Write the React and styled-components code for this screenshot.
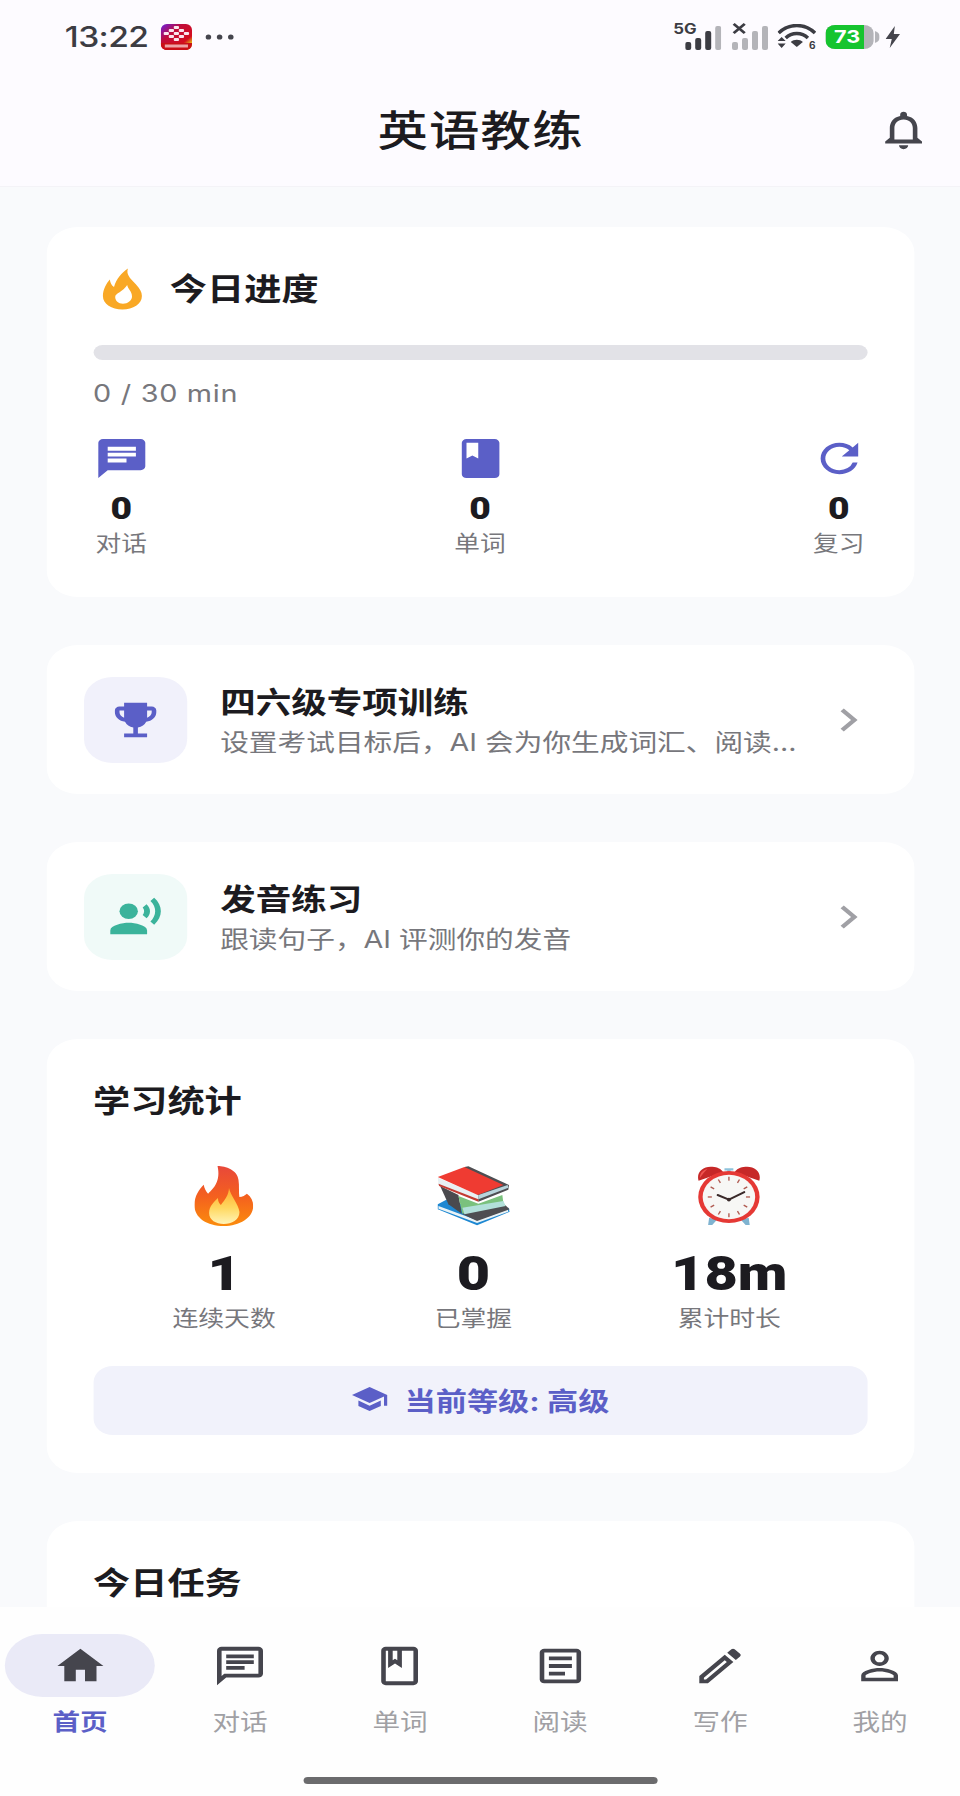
import React from 'react';
import styled, { createGlobalStyle } from 'styled-components';
import {
  MdNotificationsNone, MdChat, MdBook, MdRefresh, MdEmojiEvents, MdRecordVoiceOver,
  MdChevronRight, MdSchool, MdHome, MdOutlineChat, MdOutlineBook, MdOutlineArticle,
  MdOutlineEdit, MdPersonOutline,
} from 'react-icons/md';

const FONT = `Inter, "Noto Sans CJK SC", "Noto Sans", sans-serif`;
const NUMBER_FONT = `Roboto, Inter, sans-serif`;
const INDIGO = '#5b5fc7';

const GlobalStyle = createGlobalStyle`
  html, body {
    margin: 0;
    padding: 0;
    background: #f9fafc;
    overflow: hidden;
  }
  * { box-sizing: border-box; }
`;

// the source capture is 1.2x wider than tall, so the page is laid out at 800 and stretched
const Stretch = styled.div`
  width: 800px;
  height: 1796px;
  transform: scaleX(1.2);
  transform-origin: left top;
  display: flex;
  flex-direction: column;
  font-family: ${FONT};
  background: #f9fafc;
  overflow: hidden;
`;

const Header = styled.header`
  flex: none;
  background: #fdfbff;
  border-bottom: 1px solid #f4f3f7;
`;

const StatusBar = styled.div`
  height: 74px;
  padding: 0 0 0 54px;
  display: flex;
  align-items: center;
  justify-content: space-between;
`;

const StatusLeft = styled.div`
  display: flex;
  align-items: center;
`;

const Time = styled.span`
  font-family: Inter, sans-serif;
  font-size: 28px;
  font-weight: 500;
  color: #3c3c43;
  letter-spacing: -0.5px;
  margin-right: 10px;
`;

const StatusRight = styled.div`
  display: flex;
  align-items: center;
  margin-right: 50px;
`;

const SignalWrap = styled.div`
  position: relative;
  width: 30px;
  height: 26px;
  margin-right: ${(p) => p.$gap}px;
`;

const FiveG = styled.span`
  position: absolute;
  left: -10px;
  top: -2px;
  font-size: 14px;
  line-height: 14px;
  font-weight: 700;
  color: #3c3c43;
`;

const Battery = styled.div`
  position: relative;
  width: 40px;
  height: 24px;
  margin-left: 8px;
  border-radius: 8px;
  overflow: hidden;
  background: #b4b4b9;
  display: flex;
`;

const BatteryFill = styled.div`
  width: 81%;
  background: #16c42f;
`;

const BatteryText = styled.span`
  position: absolute;
  left: 5px;
  right: 9px;
  top: 0;
  line-height: 24px;
  text-align: center;
  font-size: 18px;
  font-weight: 700;
  color: #fff;
`;

const SignalSvg = styled.svg`
  position: absolute;
  right: 0;
  bottom: 0;
`;

const CrossSvg = styled.svg`
  position: absolute;
  left: 0;
  top: -1px;
`;

const DotsSvg = styled.svg`
  margin-left: 11px;
`;

const BoltSvg = styled.svg`
  margin-left: 5px;
`;

const NubSvg = styled.svg`
  margin-left: 1px;
`;

const TopBar = styled.div`
  height: 112px;
  padding-right: 24px;
  position: relative;
  display: flex;
  align-items: center;
  justify-content: flex-end;
  color: #45454d;
`;

const AppTitle = styled.h1`
  position: absolute;
  left: 1px;
  right: 0;
  top: 1px;
  margin: 0;
  line-height: 112px;
  text-align: center;
  font-size: 42px;
  font-weight: 500;
  color: #1c1b20;
  letter-spacing: 1px;
`;

const Content = styled.main`
  flex: 1;
  min-height: 0;
  overflow: hidden;
  padding: 40px 38.5px 0;
  display: flex;
  flex-direction: column;
  gap: 48px;
`;

const Card = styled.section`
  flex: none;
  background: #fff;
  border-radius: 26px;
  padding: ${(p) => p.$padding || '42px 39px 38px'};
`;

const ProgressHead = styled.div`
  display: flex;
  align-items: center;
  gap: 16px;
  height: 48px;
  color: #f9a825;
`;

const SectionTitle = styled.h2`
  margin: 0;
  font-size: 31px;
  line-height: 40px;
  font-weight: 700;
  color: #1c1b20;
`;

const ProgressTrack = styled.div`
  height: 15px;
  margin-top: 32px;
  border-radius: 8px;
  background: #e2e2e7;
`;

const ProgressText = styled.div`
  margin-top: 19px;
  font-size: 24px;
  line-height: 30px;
  color: #77777c;
  letter-spacing: 0.6px;
`;

const CountRow = styled.div`
  display: flex;
  justify-content: space-between;
  margin-top: 26px;
`;

const Count = styled.div`
  width: 47px;
  display: flex;
  flex-direction: column;
  align-items: center;
  color: ${INDIGO};
`;

const CountValue = styled.div`
  margin-top: 10px;
  font-family: ${NUMBER_FONT};
  font-size: 31px;
  line-height: 34px;
  font-weight: 900;
  color: #1c1b20;
`;

const CountLabel = styled.div`
  margin-top: 2px;
  font-size: 21.4px;
  line-height: 30px;
  color: #77777c;
  white-space: nowrap;
`;

const FeatureRow = styled.div`
  display: flex;
  align-items: center;
`;

const FeatureIcon = styled.div`
  flex: none;
  width: 86px;
  height: 86px;
  border-radius: 24px;
  display: flex;
  align-items: center;
  justify-content: center;
  background: ${(p) => p.$bg};
  color: ${(p) => p.$color};
`;

const FeatureBody = styled.div`
  flex: 1;
  min-width: 0;
  margin-left: 28px;
  padding-top: 2px;
`;

const FeatureTitle = styled.div`
  font-size: 29.6px;
  line-height: 40px;
  font-weight: 700;
  color: #1c1b20;
`;

const FeatureDesc = styled.div`
  margin-top: 4px;
  font-size: 23.9px;
  line-height: 34px;
  color: #77777c;
  white-space: nowrap;
`;

const Chevron = styled.div`
  flex: none;
  display: flex;
  color: #a0a0a5;
  margin-right: 5px;
`;

const StatsRow = styled.div`
  display: flex;
  justify-content: space-around;
  margin-top: 45px;
`;

const Stat = styled.div`
  display: flex;
  flex-direction: column;
  align-items: center;
`;

const StatValue = styled.div`
  margin-top: 22px;
  font-family: ${NUMBER_FONT};
  font-size: 48px;
  line-height: 52px;
  font-weight: 900;
  color: #1c1b20;
`;

const StatLabel = styled.div`
  margin-top: 3px;
  font-size: 21.5px;
  line-height: 30px;
  color: #77777c;
`;

const LevelBar = styled.div`
  height: 69px;
  margin-top: 33px;
  padding-bottom: 3px;
  border-radius: 16px;
  background: #f1f2fb;
  display: flex;
  align-items: center;
  justify-content: center;
  gap: 13px;
  color: ${INDIGO};
  font-size: 26px;
  font-weight: 700;
`;

const BottomNav = styled.nav`
  flex: none;
  background: #fefefe;
  padding-top: 27px;
  display: flex;
  flex-direction: column;
  align-items: center;
`;

const Tabs = styled.div`
  align-self: stretch;
  display: grid;
  grid-template-columns: repeat(6, 1fr);
`;

const Tab = styled.div`
  display: flex;
  flex-direction: column;
  align-items: center;
`;

const TabIcon = styled.div`
  width: 125px;
  height: 63px;
  border-radius: 32px;
  display: flex;
  align-items: center;
  justify-content: center;
  color: #45454d;
  background: ${(p) => (p.$active ? '#eaeaf7' : 'transparent')};
`;

const TabLabel = styled.div`
  margin-top: 10px;
  font-size: 23px;
  line-height: 30px;
  font-weight: ${(p) => (p.$active ? 700 : 400)};
  color: ${(p) => (p.$active ? INDIGO : '#a0a0a4')};
`;

const HomeIndicator = styled.div`
  width: 295px;
  height: 7px;
  margin: 40px 0 12px;
  border-radius: 4px;
  background: #6b6b6d;
`;

const AppBadge = () => (
  <svg width="26" height="26" viewBox="0 0 31 26" preserveAspectRatio="none">
    <defs>
      <linearGradient id="badge" x1="0" y1="0" x2="1" y2="1">
        <stop offset="0" stopColor="#6a1fe0" />
        <stop offset="0.35" stopColor="#c00d3a" />
        <stop offset="0.72" stopColor="#d40d1e" />
        <stop offset="0.86" stopColor="#e6c21a" />
      </linearGradient>
    </defs>
    <rect width="31" height="26" rx="6" fill="url(#badge)" />
    <path d="M0 19 H31 V20 C31 23.5 28.5 26 25 26 H6 C2.5 26 0 23.5 0 20Z" fill="#c90f16" />
    {[[15.5, 2], [10.5, 5], [20.5, 5], [15.5, 8], [5.5, 8], [25.5, 8], [10.5, 11], [20.5, 11], [15.5, 14]].map(([x, y]) => (
      <rect key={`${x}-${y}`} x={x - 2.6} y={y} width="5.2" height="3" rx="1" fill="#fbe7ee" />
    ))}
    <rect x="4" y="20.5" width="23" height="3" fill="#f8d5d5" opacity="0.75" />
  </svg>
);

const Dots = () => (
  <DotsSvg width="24" height="6" viewBox="0 0 27 6" preserveAspectRatio="none">
    <circle cx="3" cy="3" r="2.6" fill="#45454d" />
    <circle cx="13.5" cy="3" r="2.6" fill="#45454d" />
    <circle cx="24" cy="3" r="2.6" fill="#45454d" />
  </DotsSvg>
);

const SignalBars = ({ levels }) => (
  <SignalSvg width="30" height="24" viewBox="0 0 36 24" preserveAspectRatio="none">
    {[8, 12, 19, 24].map((h, i) => (
      <rect key={h} x={i * 10} y={24 - h} width="6" height={h} rx="2" fill={i < levels ? '#3c3c43' : '#b4b4b9'} />
    ))}
  </SignalSvg>
);

const CrossMark = () => (
  <CrossSvg width="12" height="11" viewBox="0 0 13 12" preserveAspectRatio="none">
    <path d="M1.5 1 L11.5 11 M11.5 1 L1.5 11" stroke="#3c3c43" strokeWidth="2.6" />
  </CrossSvg>
);

const Wifi = () => (
  <svg width="32" height="26" viewBox="0 0 38 26" preserveAspectRatio="none">
    <path d="M1 9 C11 -1 27 -1 37 9" fill="none" stroke="#3c3c43" strokeWidth="3.4" />
    <path d="M8 14 C14 8 24 8 30 14" fill="none" stroke="#3c3c43" strokeWidth="3.4" />
    <path d="M13 18 C16 15 22 15 25 18 L19 23Z" fill="#3c3c43" />
    <path d="M3 13 L7 17 H-1Z M3 24 L7 19.5 H-1Z" fill="#3c3c43" transform="translate(1 0)" />
    <text x="31" y="25" fontSize="10" fontWeight="700" fill="#3c3c43" fontFamily="Inter, sans-serif">6</text>
  </svg>
);

const Bolt = () => (
  <BoltSvg width="12" height="22" viewBox="0 0 14 22" preserveAspectRatio="none">
    <path d="M9 0 L0 13 H6 L4 22 L14 8 H8Z" fill="#45454d" />
  </BoltSvg>
);

const BatteryNub = () => (
  <NubSvg width="4" height="12" viewBox="0 0 4 12">
    <path d="M0 0 C3 1 4 3 4 6 C4 9 3 11 0 12Z" fill="#b4b4b9" />
  </NubSvg>
);

const Flame = () => (
  <svg width="48" height="48" viewBox="0 0 48 48">
    <path
      fillRule="evenodd"
      fill="currentColor"
      d="M28.6 3.5 C27 9 30 13 35 19 C38.5 23.5 40.25 27 40.25 31 C40.25 39 33 44.5 24 44.5 C15 44.5 7.75 39 7.75 31 C7.75 24 11 18 13.5 14.5 C14 18 15 20.5 17 22 C19 14 23 8 28.6 3.5Z M28 20 C28.5 24 32 26 32 31.5 C32 35.5 28.5 38.7 24.5 38.7 C20.5 38.7 18 35.5 18 32 C18 28 24.5 27 28 20Z"
    />
  </svg>
);

const FireEmoji = () => (
  <svg width="49" height="60" viewBox="0 0 60 60" preserveAspectRatio="none">
    <defs>
      <linearGradient id="fireOuter" x1="0.5" y1="0" x2="0.5" y2="1">
        <stop offset="0" stopColor="#e8483a" />
        <stop offset="0.5" stopColor="#f4601f" />
        <stop offset="1" stopColor="#fb8c0c" />
      </linearGradient>
      <linearGradient id="fireInner" x1="0.5" y1="0" x2="0.5" y2="1">
        <stop offset="0" stopColor="#ffab2e" />
        <stop offset="0.55" stopColor="#ffd860" />
        <stop offset="1" stopColor="#fff4b8" />
      </linearGradient>
    </defs>
    <path d="M23.6 0 C32 0 44 4 45 14 C46 20 45 26 45.9 31 C49 31 52 29 53.6 27.7 C58 31 60 35 60 40 C60 52 46 60 30 60 C13 60 0 52 0 39 C0 30 5 23 9.5 18.7 C10 22 12 26 14 27.7 C20 22 27 15 23.6 0Z" fill="url(#fireOuter)" />
    <path d="M35.3 22 C37 30 45 38 46 46 C46 54 38 58 30 58 C22 58 15 54 15 47 C15 40 20 36 24 32 C24 36 26 38 27 39 C31 34 35 29 35.3 22Z" fill="url(#fireInner)" />
  </svg>
);

const BooksEmoji = () => (
  <svg width="61" height="60" viewBox="25 35 220 180" preserveAspectRatio="none">
    <polygon points="28,150 65,130 150,180 240,160 244,172 146,213 28,165" fill="#1e88d2" />
    <polygon points="30,155 146,198 238,165 240,172 146,206 30,163" fill="#eaf3f6" />
    <polygon points="100,178 228,150 244,165 146,200" fill="#4e4e52" />
    <polygon points="35,95 90,122 100,178 60,150" fill="#4a4a4e" />
    <polygon points="90,125 150,148 222,122 225,145 102,178" fill="#7ac17d" />
    <polygon points="102,160 225,140 232,155 108,180" fill="#b2e0da" />
    <polygon points="108,38 120,36 242,92 240,106 150,142 148,122" fill="#4e4e52" />
    <polygon points="28,70 150,122 150,135 30,90" fill="#e8f0f3" />
    <polygon points="150,122 238,92 240,100 150,135" fill="#b8d4dc" />
    <polygon points="30,88 150,135 150,142 32,95" fill="#c23b32" />
    <polygon points="28,68 108,38 225,92 148,122" fill="#ef3b32" />
  </svg>
);

const ClockEmoji = () => (
  <svg width="54" height="60" viewBox="40 33 190 184" preserveAspectRatio="none">
    <path d="M75 192 L72 214 L84 214 L98 198Z M191 192 L194 214 L182 214 L168 198Z" fill="#7fb3d0" />
    <path d="M120 40 H146 V47 H138 V62 H128 V47 H120Z" fill="#8fc3dc" />
    <path d="M44 78 C36 50 60 30 90 36 C104 38 114 46 116 52Z" fill="#c62828" />
    <path d="M222 78 C230 50 206 30 176 36 C162 38 152 46 150 52Z" fill="#c62828" />
    <path d="M48 70 C46 58 56 44 70 42 C62 50 54 60 48 70Z" fill="#ef5350" />
    <ellipse cx="133" cy="128" rx="90" ry="80" fill="#e53935" />
    <ellipse cx="133" cy="128" rx="77" ry="68" fill="#f7f7f5" />
    {[0, 30, 60, 90, 120, 150, 180, 210, 240, 270, 300, 330].map((a) => (
      <rect key={a} x="131" y="66" width="4" height="12" fill="#b05a50" transform={`rotate(${a} 133 128)`} />
    ))}
    <path d="M133 136 L100 122 M133 136 L178 113" stroke="#3a2a2a" strokeWidth="6" strokeLinecap="round" />
    <circle cx="133" cy="136" r="6" fill="#3a2a2a" />
  </svg>
);

const counts = [
  { icon: <MdChat size={47} />, label: '对话' },
  { icon: <MdBook size={47} />, label: '单词' },
  { icon: <MdRefresh size={47} />, label: '复习' },
];

const features = [
  {
    icon: <MdEmojiEvents size={46} />,
    bg: '#f1f1fb',
    color: INDIGO,
    title: '四六级专项训练',
    desc: '设置考试目标后，AI 会为你生成词汇、阅读...',
  },
  {
    icon: <MdRecordVoiceOver size={46} />,
    bg: '#f0faf8',
    color: '#3bb39b',
    title: '发音练习',
    desc: '跟读句子，AI 评测你的发音',
  },
];

const stats = [
  { emoji: <FireEmoji />, value: '1', label: '连续天数' },
  { emoji: <BooksEmoji />, value: '0', label: '已掌握' },
  { emoji: <ClockEmoji />, value: '18m', label: '累计时长' },
];

const tabs = [
  { icon: <MdHome size={46} />, label: '首页', active: true },
  { icon: <MdOutlineChat size={46} />, label: '对话' },
  { icon: <MdOutlineBook size={46} />, label: '单词' },
  { icon: <MdOutlineArticle size={46} />, label: '阅读' },
  { icon: <MdOutlineEdit size={46} />, label: '写作' },
  { icon: <MdPersonOutline size={46} />, label: '我的' },
];

const App = () => (
  <Stretch>
    <GlobalStyle />
    <Header>
      <StatusBar>
        <StatusLeft>
          <Time>13:22</Time>
          <AppBadge />
          <Dots />
        </StatusLeft>
        <StatusRight>
          <SignalWrap $gap={9}>
            <FiveG>5G</FiveG>
            <SignalBars levels={3} />
          </SignalWrap>
          <SignalWrap $gap={8}>
            <CrossMark />
            <SignalBars levels={0} />
          </SignalWrap>
          <Wifi />
          <Battery>
            <BatteryFill />
            <BatteryText>73</BatteryText>
          </Battery>
          <BatteryNub />
          <Bolt />
        </StatusRight>
      </StatusBar>
      <TopBar>
        <AppTitle>英语教练</AppTitle>
        <MdNotificationsNone size={46} />
      </TopBar>
    </Header>

    <Content>
      <Card $padding="38px 39px 39px">
        <ProgressHead>
          <Flame />
          <SectionTitle>今日进度</SectionTitle>
        </ProgressHead>
        <ProgressTrack />
        <ProgressText>0 / 30 min</ProgressText>
        <CountRow>
          {counts.map((c) => (
            <Count key={c.label}>
              {c.icon}
              <CountValue>0</CountValue>
              <CountLabel>{c.label}</CountLabel>
            </Count>
          ))}
        </CountRow>
      </Card>

      {features.map((f) => (
        <Card key={f.title} $padding="32px 27px 31px 31px">
          <FeatureRow>
            <FeatureIcon $bg={f.bg} $color={f.color}>{f.icon}</FeatureIcon>
            <FeatureBody>
              <FeatureTitle>{f.title}</FeatureTitle>
              <FeatureDesc>{f.desc}</FeatureDesc>
            </FeatureBody>
            <Chevron><MdChevronRight size={46} /></Chevron>
          </FeatureRow>
        </Card>
      ))}

      <Card>
        <SectionTitle>学习统计</SectionTitle>
        <StatsRow>
          {stats.map((s) => (
            <Stat key={s.label}>
              {s.emoji}
              <StatValue>{s.value}</StatValue>
              <StatLabel>{s.label}</StatLabel>
            </Stat>
          ))}
        </StatsRow>
        <LevelBar>
          <MdSchool size={32} />
          <span>当前等级: 高级</span>
        </LevelBar>
      </Card>

      <Card>
        <SectionTitle>今日任务</SectionTitle>
      </Card>
    </Content>

    <BottomNav>
      <Tabs>
        {tabs.map((t) => (
          <Tab key={t.label}>
            <TabIcon $active={t.active}>{t.icon}</TabIcon>
            <TabLabel $active={t.active}>{t.label}</TabLabel>
          </Tab>
        ))}
      </Tabs>
      <HomeIndicator />
    </BottomNav>
  </Stretch>
);

export default App;
